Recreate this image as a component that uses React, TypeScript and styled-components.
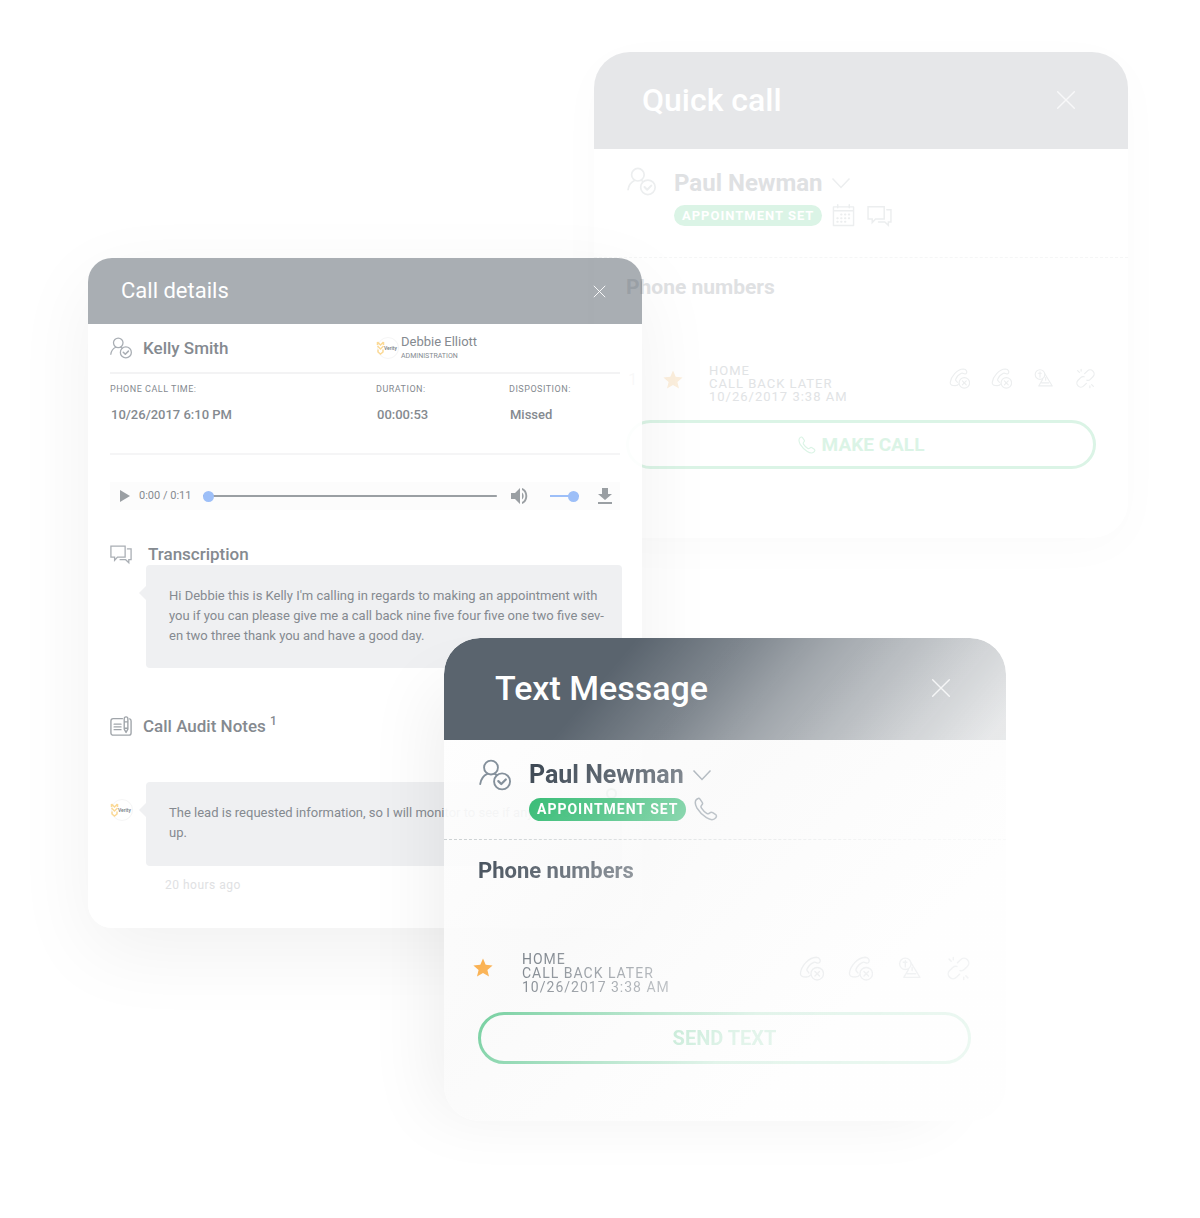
import React from "react";
import styled, { createGlobalStyle, css } from "styled-components";

const GlobalStyle = createGlobalStyle`
  *, *::before, *::after { box-sizing: border-box; }
  body { margin: 0; background: #fff; font-family: Roboto, "Liberation Sans", sans-serif; }
  h2, h3, p, dl, dd { margin: 0; }
  button { font: inherit; color: inherit; background: none; border: 0; padding: 0; cursor: pointer; }
  svg { display: block; flex: none; }
`;

/* ---------- canvas with floating windows ---------- */

const Canvas = styled.main`
  position: relative;
  min-height: 1218px;
  min-width: 1160px;
  overflow: hidden;
`;

const Window = styled.section<{ $x: number; $y: number; $w: number; $r: number }>`
  position: absolute;
  left: ${(p) => p.$x}px;
  top: ${(p) => p.$y}px;
  width: ${(p) => p.$w}px;
  border-radius: ${(p) => p.$r}px;
`;

const QuickWindow = styled(Window)`
  background: #fff;
  box-shadow: 0 10px 50px rgba(0, 0, 0, 0.02);
`;

const DetailsWindow = styled(Window)`
  box-shadow: 0 24px 80px rgba(0, 0, 0, 0.06);
  color: #858a90;
`;

const TextWindow = styled(Window)`
  background: linear-gradient(135deg, rgba(255, 255, 255, 0.94), rgba(250, 250, 250, 0.92) 40%, rgba(254, 254, 254, 0.95) 75%);
  box-shadow: -40px 20px 70px -30px rgba(0, 0, 0, 0.07);
`;

const Fade = styled.div<{ $on: boolean }>`
  border-radius: inherit;
  ${(p) =>
    p.$on &&
    css`
      mask-image: linear-gradient(
        130deg,
        #000 20%,
        rgba(0, 0, 0, 0.78) 31%,
        rgba(0, 0, 0, 0.56) 40%,
        rgba(0, 0, 0, 0.27) 56%,
        rgba(0, 0, 0, 0.13) 65%,
        rgba(0, 0, 0, 0.07) 100%
      );
    `}
`;

/* ---------- lead window (quick call / text message) ---------- */

type Tone = { head: string; text: string; meta: string; icon: string; green: string; star: string; line: string; cross: string };

const pale: Tone = {
  head: "#e6e7e9", text: "#dfe1e3", meta: "#e1e3e5", icon: "#eceeef",
  green: "#dbf4e6", star: "#fcefdd", line: "#f5f6f6", cross: "#f8f8f9",
};
const strong: Tone = {
  head: "#5a646e", text: "#3d4854", meta: "#3d4854", icon: "#84909b",
  green: "#2fb970", star: "#fa9a1c", line: "#cdd2d4", cross: "#e4e7e9",
};

type Sized = { $big: boolean; $tone: Tone };

const LeadHead = styled.header<Sized>`
  display: flex;
  align-items: center;
  justify-content: space-between;
  height: ${(p) => (p.$big ? 102 : 97)}px;
  padding: 0 ${(p) => (p.$big ? 55 : 52)}px 2px ${(p) => (p.$big ? 51 : 48)}px;
  border-radius: 36px 36px 0 0;
  background: ${(p) => p.$tone.head};
  color: #fff;
`;

const LeadTitle = styled.h2<{ $big: boolean }>`
  font-size: ${(p) => (p.$big ? 34 : 32)}px;
  line-height: 40px;
  font-weight: 500;
`;

const LeadPerson = styled.div<Sized>`
  display: flex;
  gap: 18px;
  height: ${(p) => (p.$big ? 100 : 109)}px;
  padding: ${(p) => (p.$big ? "18px 35px 0" : "17px 33px 0")};
  border-bottom: 1px dashed ${(p) => p.$tone.line};
`;

const PersonMain = styled.div`
  display: flex;
  flex-direction: column;
`;

const NameRow = styled.div`
  display: flex;
  align-items: center;
  gap: 8px;
`;

const LeadName = styled.h3<Sized>`
  font-size: ${(p) => (p.$big ? 25 : 24)}px;
  line-height: 34px;
  font-weight: 700;
  color: ${(p) => p.$tone.text};
`;

const TagRow = styled.div<{ $big: boolean }>`
  display: flex;
  align-items: center;
  gap: ${(p) => (p.$big ? 8 : 10)}px;
  height: ${(p) => (p.$big ? 34 : 30)}px;
`;

const Tag = styled.span<Sized>`
  height: ${(p) => (p.$big ? 23 : 21)}px;
  padding: 0 8px;
  border-radius: 12px;
  font-size: ${(p) => (p.$big ? 14 : 13)}px;
  line-height: ${(p) => (p.$big ? 23 : 21)}px;
  font-weight: 700;
  letter-spacing: 1px;
  color: #fff;
  background: ${(p) => p.$tone.green};
`;

const LeadBody = styled.div<{ $big: boolean }>`
  padding: ${(p) => (p.$big ? "16px 35px 57px 34px" : "14px 32px 69px")};
`;

const BodyTitle = styled.h3<Sized>`
  font-size: ${(p) => (p.$big ? 22 : 21)}px;
  line-height: 30px;
  font-weight: 700;
  color: ${(p) => p.$tone.text};
`;

const NumberRow = styled.div<Sized>`
  display: flex;
  align-items: flex-start;
  margin-top: ${(p) => (p.$big ? 66 : 62)}px;
  color: ${(p) => p.$tone.meta};
`;

const Rank = styled.span`
  width: 37px;
  padding: 5px 0 0 2px;
  font-size: 17px;
  line-height: 20px;
  color: #b4b6b8;
`;

const StarSlot = styled.div<{ $big: boolean }>`
  padding-top: 6px;
  margin-left: ${(p) => (p.$big ? -5 : 0)}px;
`;

const NumberText = styled.p<{ $big: boolean }>`
  flex: 1;
  padding-left: ${(p) => (p.$big ? 29 : 26)}px;
  font-size: ${(p) => (p.$big ? 14 : 13)}px;
  line-height: ${(p) => (p.$big ? 14 : 13)}px;
  letter-spacing: 1px;
`;

const Actions = styled.div<{ $big: boolean }>`
  display: flex;
  gap: ${(p) => (p.$big ? 24 : 21)}px;
  padding-top: 4px;
`;

const MainButton = styled.button<Sized>`
  display: flex;
  align-items: center;
  justify-content: center;
  gap: 6px;
  width: 100%;
  height: ${(p) => (p.$big ? 52 : 49)}px;
  margin-top: ${(p) => (p.$big ? 18 : 17)}px;
  border: 3px solid ${(p) => p.$tone.green};
  border-radius: 26px;
  font-size: ${(p) => (p.$big ? 20 : 19)}px;
  font-weight: 700;
  color: ${(p) => p.$tone.green};
`;

/* ---------- icons ---------- */

type IconProps = { size: number; color?: string };
const Icon = ({ size, color = "currentColor", w = 1.5, children }: IconProps & { w?: number; children: React.ReactNode }) => (
  <svg width={size} height={size} viewBox="0 0 24 24" fill="none" stroke={color} strokeWidth={w} strokeLinecap="round" strokeLinejoin="round" aria-hidden="true">
    {children}
  </svg>
);

const PersonCheck = (p: IconProps) => (
  <Icon {...p} w={1.4}>
    <circle cx="9" cy="6.4" r="5.2" />
    <path d="M.9 18.8c.5-3.600 2.600-6.300 5.300-7.600M11.800 11.200c.6.2 1 .4 1.400.8" />
    <circle cx="17.3" cy="16.8" r="6" />
    <path d="m14.5 16.600 2.200 2.200 3.400-3.400" strokeWidth="1.700" />
  </Icon>
);
const Chat = (p: IconProps) => (
  <Icon {...p} w={1.4}>
    <path d="M1 3.5h15.5v11.8H8.2L5 18.8v-3.5H1z" strokeLinejoin="miter" />
    <path d="M19 6.5h4v11.7h-2.5v3.3l-3.4-3.3H11" strokeLinejoin="miter" />
  </Icon>
);
const Calendar = (p: IconProps) => (
  <Icon {...p}>
    <path d="M1.5 3h21v19.5h-21zM1.5 7h21M6 .8V4M18 .8V4" />
    <path d="M9.5 11h.5M13.5 11h.5M17.5 11h.5M5.5 14.8H6M9.5 14.8h.5M13.5 14.8h.5M17.5 14.8h.5M5.5 18.6H6M9.5 18.6h.5M13.5 18.6h.5" strokeWidth="2" />
  </Icon>
);
const Phone = (p: IconProps) => (
  <Icon {...p}>
    <path d="M2.2 2.8c1.3-1.5 2.8-2 3.8-.7l2.2 3.2c.8 1.2.4 2-.6 2.9-1 .9-1 1.5-.1 2.9 1.3 2 3 3.8 5.2 5.2 1.4.9 2.1.8 3-.2.9-1 1.8-1.300 3-.5l3 2.100c1.300 1 .8 2.500-.7 3.800-2 1.700-5.200 1.300-8.600-.8A29 29 0 0 1 3 11.200C1.200 7.800.7 4.700 2.200 2.800Z" />
  </Icon>
);
const PhoneBadge = (p: IconProps) => (
  <Icon {...p} w={1.3}>
    <path d="M11 18.300c-.6 1.200-2 1.900-4 1.900-3.500 0-6-.8-5.600-3.700C2.300 9.500 9 1.500 16.500 1.200c1.600 0 3 .8 3.600 2.200.7 1.800-.2 3.300-1.700 3.400-1.700.1-2.500-1.500-4.200-.7-2.700 1.200-5.500 4-6.600 6.900-.6 1.600 1.400 1.900 1.900 3.400" />
    <circle cx="17.500" cy="17" r="6" />
    <path d="m15.300 14.800 4.400 4.400m0-4.400-4.400 4.400" />
  </Icon>
);
const Warn = (p: IconProps) => (
  <Icon {...p} w={1.3}>
    <circle cx="8" cy="7.500" r="5.500" />
    <path d="M8 4.500v6M6 6h3.500" />
    <path d="M13.500 6.500 22 20.500H6.500L11 13M10 17h8M14.500 11v3" />
  </Icon>
);
const Unlink = (p: IconProps) => (
  <Icon {...p} w={1.4}>
    <path d="m11 6.500 3-3a4.500 4.500 0 0 1 6.500 6.500l-3 3a4 4 0 0 1-4 1" />
    <path d="m13 17.500-3 3A4.500 4.500 0 0 1 3.500 14l3-3a4 4 0 0 1 4-1" />
    <path d="m3 3 2 2M7 1.500v2M19 19l2 2M17 20.500v2" />
  </Icon>
);
const Notes = (p: IconProps) => (
  <Icon {...p}>
    <path d="M13.500 4H3.500A2.500 2.500 0 0 0 1 6.500v13A2.500 2.500 0 0 0 3.500 22h17a2.500 2.500 0 0 0 2.500-2.500v-13a2.500 2.500 0 0 0-1.500-2.300" />
    <path d="M4.500 10H12M4.500 13H12M4.500 16H12" />
    <path d="M15.500 4a2 2 0 0 1 4 0v11.500l-2 3.500-2-3.500zM15.500 7.500h4M15.500 14.500h4" />
  </Icon>
);
const Cross = (p: IconProps) => (
  <Icon {...p} w={1.7}>
    <path d="m2 2 20 20M22 2 2 22" />
  </Icon>
);
const Chevron = ({ color }: { color: string }) => (
  <svg width="20" height="12" viewBox="0 0 20 12" fill="none" stroke={color} strokeWidth="1.500" aria-hidden="true">
    <path d="m1.500 1.500 8.500 9 8.500-9" />
  </svg>
);
const Star = ({ color }: { color: string }) => (
  <svg width="20" height="20" viewBox="0 0 20 20" fill={color} aria-hidden="true">
    <path d="m10 .6 2.700 6.200 6.900.6-5.200 4.500 1.600 6.700-6-3.600-6 3.600 1.600-6.700L.4 7.400l6.900-.6z" />
  </svg>
);

/* ---------- lead window component ---------- */

const PersonIcon = styled.div`
  padding-top: 1px;
`;

const QuickIcons = styled.div`
  display: flex;
  align-items: center;
  gap: 12px;
`;

type LeadProps = { title: string; action: string; big: boolean; tone: Tone };

function Lead({ title, action, big, tone }: LeadProps) {
  const s = { $big: big, $tone: tone };
  const small = big ? 25 : 21;
  return (
    <Fade $on={big}>
      <LeadHead {...s}>
        <LeadTitle $big={big}>{title}</LeadTitle>
        <button aria-label="Close"><Cross size={20} color={tone.cross} /></button>
      </LeadHead>
      <LeadPerson {...s}>
        <PersonIcon><PersonCheck size={big ? 32 : 29} color={tone.icon} /></PersonIcon>
        <PersonMain>
          <NameRow>
            <LeadName {...s}>Paul Newman</LeadName>
            <button aria-label="Choose lead"><Chevron color={tone.icon} /></button>
          </NameRow>
          <TagRow $big={big}>
            <Tag {...s}>APPOINTMENT SET</Tag>
            {big ? (
              <button aria-label="Call"><Phone size={24} color={tone.icon} /></button>
            ) : (
              <QuickIcons>
                <button aria-label="Calendar"><Calendar size={23} color={tone.icon} /></button>
                <button aria-label="Messages"><Chat size={25} color={tone.icon} /></button>
              </QuickIcons>
            )}
          </TagRow>
        </PersonMain>
      </LeadPerson>
      <LeadBody $big={big}>
        <BodyTitle {...s}>Phone numbers</BodyTitle>
        <NumberRow {...s}>
          {!big && <Rank>1</Rank>}
          <StarSlot $big={big}><Star color={tone.star} /></StarSlot>
          <NumberText $big={big}>HOME<br />CALL BACK LATER<br />10/26/2017 3:38 AM</NumberText>
          <Actions $big={big}>
            <button aria-label="Wrong number"><PhoneBadge size={small} color={tone.icon} /></button>
            <button aria-label="Do not call"><PhoneBadge size={small} color={tone.icon} /></button>
            <button aria-label="Report"><Warn size={small} color={tone.icon} /></button>
            <button aria-label="Unlink"><Unlink size={small} color={tone.icon} /></button>
          </Actions>
        </NumberRow>
        <MainButton {...s}>
          {!big && <Phone size={18} color={tone.green} />}
          {action}
        </MainButton>
      </LeadBody>
    </Fade>
  );
}

/* ---------- call details window ---------- */

const DetailsHead = styled.header`
  display: flex;
  align-items: center;
  justify-content: space-between;
  height: 66px;
  padding: 0 36px 0 33px;
  border-radius: 24px 24px 0 0;
  background: rgba(83, 93, 103, 0.5);
  color: #fff;
`;

const DetailsTitle = styled.h2`
  font-size: 22px;
  line-height: 28px;
  font-weight: 400;
`;

const DetailsBody = styled.div`
  padding: 0 22px;
  border-radius: 0 0 24px 24px;
  background: rgba(255, 255, 255, 0.9);
`;

const Columns = styled.div`
  display: grid;
  grid-template-columns: 266px 133px 1fr;
  align-items: center;
  height: 48px;
`;

const Identity = styled.div`
  display: flex;
  align-items: center;
  gap: 11px;
`;

const SmallName = styled.h3`
  font-size: 17px;
  line-height: 22px;
  font-weight: 500;
  sup { font-size: 12px; line-height: 12px; }
`;

const Agent = styled.div`
  display: flex;
  align-items: center;
  gap: 1px;
  white-space: nowrap;
`;

const AgentName = styled.p`
  font-size: 13px;
  line-height: 16px;
`;

const AgentRole = styled.p`
  font-size: 7px;
  line-height: 12px;
`;

const Facts = styled.dl`
  display: grid;
  grid-template-columns: 266px 133px 1fr;
  height: 83px;
  padding-top: 9px;
  border-top: 2px solid #f3f3f4;
  border-bottom: 2px solid #f5f5f6;
  dt { font-size: 9px; line-height: 12px; letter-spacing: 0.5px; }
  dd { padding: 12px 0 0 1px; font-size: 13px; line-height: 16px; font-weight: 500; }
`;

const Player = styled.div`
  display: flex;
  align-items: center;
  height: 28px;
  margin-top: 27px;
  padding: 0 7px 0 9px;
  background: #fcfcfc;
  color: #9a9fa3;
`;

const Time = styled.span`
  margin: 0 12px 0 8px;
  font-size: 11px;
  line-height: 14px;
  white-space: nowrap;
  color: #858a90;
`;

const Range = styled.input<{ $track: string }>`
  appearance: none;
  width: 100%;
  min-width: 0;
  height: 12px;
  margin: 0;
  background: linear-gradient(${(p) => p.$track}, ${(p) => p.$track}) center / 100% 2px no-repeat;
  &::-webkit-slider-thumb {
    appearance: none;
    width: 11px;
    height: 11px;
    border-radius: 50%;
    background: #9dbff8;
  }
`;

const Seek = styled.label`
  display: flex;
  flex: 1;
`;

const Volume = styled.label`
  display: flex;
  width: 29px;
  margin: 0 18px 0 22px;
`;

const SpeakerButton = styled.button`
  margin-left: 13px;
`;

const Section = styled.div<{ $top: number; $gap: number }>`
  display: flex;
  align-items: center;
  gap: ${(p) => p.$gap}px;
  margin-top: ${(p) => p.$top}px;
`;

const BubbleRow = styled.div<{ $top: number }>`
  display: grid;
  grid-template-columns: 24px 1fr;
  gap: 12px;
  margin: ${(p) => p.$top}px -2px 0 0;
`;

const LogoSlot = styled.div`
  padding-top: 17px;
`;

const Bubble = styled.div<{ $h: number }>`
  grid-column: 2;
  position: relative;
  min-height: ${(p) => p.$h}px;
  padding: 21px 16px 20px 23px;
  border-radius: 4px;
  background: #eff0f2;
  font-size: 13px;
  line-height: 20px;
  &::before {
    content: "";
    position: absolute;
    left: -7px;
    top: 21px;
    border: 7px solid transparent;
    border-left: 0;
    border-right-color: #eff0f2;
  }
`;

const Pin = styled.span`
  position: absolute;
  right: 5px;
  top: 6px;
  width: 11px;
  height: 11px;
  border: 2px solid #6d9a80;
  border-radius: 50%;
`;

const Ago = styled.p`
  padding: 10px 0 34px 55px;
  font-size: 12px;
  line-height: 18px;
  letter-spacing: 0.5px;
  color: #e0e1e3;
`;

const LogoText = styled.text`
  font: 500 5px Roboto, sans-serif;
  fill: #747a80;
`;

const Logo = () => (
  <svg width="24" height="22" viewBox="0 0 24 22" role="img" aria-label="Verity logo">
    <circle cx="12" cy="11" r="10.500" fill="#fff" stroke="#f5f5f5" />
    <path d="m1.500 5 3 3 3-3M1.500 9l3 3 3-3M2 12.500v2.500l2.500 2 2.500-2v-2.500M1.500 5v3M7.500 5v3" fill="none" stroke="#fbd995" strokeWidth="1.500" />
    <LogoText x="8" y="13">Verity</LogoText>
  </svg>
);

function Details() {
  return (
    <>
      <DetailsHead>
        <DetailsTitle>Call details</DetailsTitle>
        <button aria-label="Close"><Cross size={13} color="#fff" /></button>
      </DetailsHead>
      <DetailsBody>
        <Columns>
          <Identity>
            <PersonCheck size={22} color="#a9aeb4" />
            <SmallName>Kelly Smith</SmallName>
          </Identity>
          <Agent>
            <Logo />
            <div>
              <AgentName>Debbie Elliott</AgentName>
              <AgentRole>ADMINISTRATION</AgentRole>
            </div>
          </Agent>
        </Columns>
        <Facts>
          <div><dt>PHONE CALL TIME:</dt><dd>10/26/2017 6:10 PM</dd></div>
          <div><dt>DURATION:</dt><dd>00:00:53</dd></div>
          <div><dt>DISPOSITION:</dt><dd>Missed</dd></div>
        </Facts>
        <Player>
          <button aria-label="Play">
            <svg width="12" height="14" viewBox="0 0 12 14" fill="currentColor"><path d="M1 1v12l10-6z" /></svg>
          </button>
          <Time>0:00 / 0:11</Time>
          <Seek><Range type="range" aria-label="Position" min="0" max="11" defaultValue="0" $track="#9a9fa3" /></Seek>
          <SpeakerButton aria-label="Mute">
            <svg width="18" height="18" viewBox="0 0 18 18" fill="currentColor">
              <path d="M1 6v6h4l5 5V1L5 6z" />
              <path d="M12 5.500c2.200 1.500 2.200 5.500 0 7zM12 1c7 2 7 14 0 16v-2c4.500-2 4.500-10 0-12z" />
            </svg>
          </SpeakerButton>
          <Volume><Range type="range" aria-label="Volume" min="0" max="100" defaultValue="100" $track="#9dbff8" /></Volume>
          <button aria-label="Download">
            <svg width="16" height="18" viewBox="0 0 16 18" fill="currentColor"><path d="M5 1h6v6h4l-7 6-7-6h4zM1 15h14v2H1z" /></svg>
          </button>
        </Player>
        <Section $top={33} $gap={16}>
          <Chat size={22} color="#a9aeb4" />
          <SmallName>Transcription</SmallName>
        </Section>
        <BubbleRow $top={0}>
          <Bubble $h={103}>
            Hi Debbie this is Kelly I'm calling in regards to making an appointment with<br />
            you if you can please give me a call back nine five four five one two five sev-<br />
            en two three thank you and have a good day.
          </Bubble>
        </BubbleRow>
        <Section $top={47} $gap={11}>
          <Notes size={22} color="#a0a5aa" />
          <SmallName>Call Audit Notes <sup>1</sup></SmallName>
        </Section>
        <BubbleRow $top={45}>
          <LogoSlot><Logo /></LogoSlot>
          <Bubble $h={84}>
            The lead is requested information, so I will monitor to see if anyone follows up.
            <Pin />
          </Bubble>
        </BubbleRow>
        <Ago>20 hours ago</Ago>
      </DetailsBody>
    </>
  );
}

export default function App() {
  return (
    <>
      <GlobalStyle />
      <Canvas>
        <QuickWindow $x={594} $y={52} $w={534} $r={36}>
          <Lead title="Quick call" action="MAKE CALL" big={false} tone={pale} />
        </QuickWindow>
        <DetailsWindow $x={88} $y={258} $w={554} $r={24}>
          <Details />
        </DetailsWindow>
        <TextWindow $x={444} $y={638} $w={562} $r={36}>
          <Lead title="Text Message" action="SEND TEXT" big tone={strong} />
        </TextWindow>
      </Canvas>
    </>
  );
}
